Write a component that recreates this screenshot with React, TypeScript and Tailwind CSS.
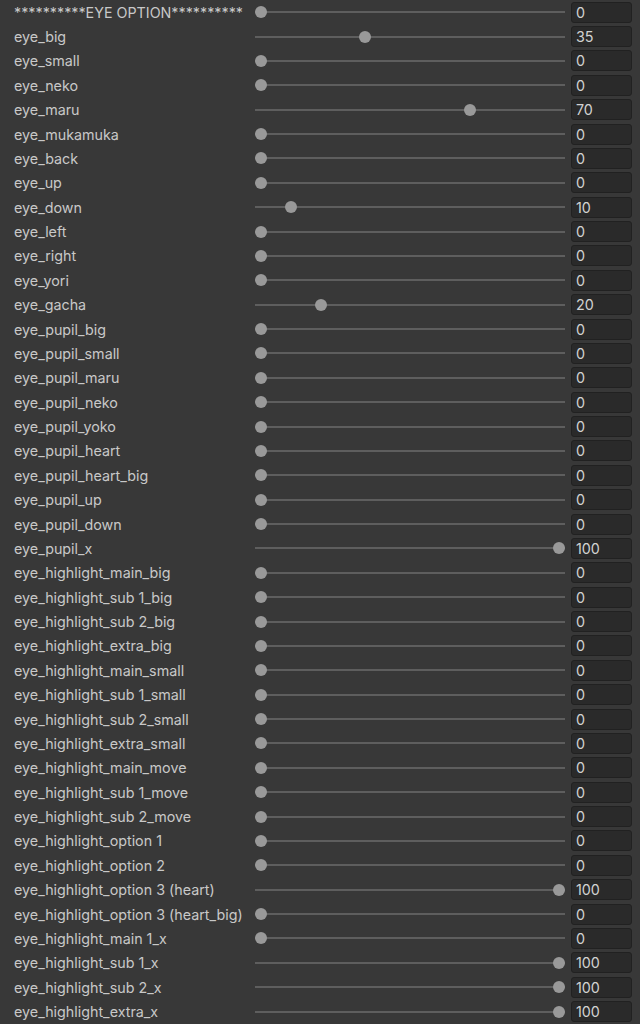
const rows: [string, number][] = [
  ['**********EYE OPTION**********', 0],
  ['eye_big', 35],
  ['eye_small', 0],
  ['eye_neko', 0],
  ['eye_maru', 70],
  ['eye_mukamuka', 0],
  ['eye_back', 0],
  ['eye_up', 0],
  ['eye_down', 10],
  ['eye_left', 0],
  ['eye_right', 0],
  ['eye_yori', 0],
  ['eye_gacha', 20],
  ['eye_pupil_big', 0],
  ['eye_pupil_small', 0],
  ['eye_pupil_maru', 0],
  ['eye_pupil_neko', 0],
  ['eye_pupil_yoko', 0],
  ['eye_pupil_heart', 0],
  ['eye_pupil_heart_big', 0],
  ['eye_pupil_up', 0],
  ['eye_pupil_down', 0],
  ['eye_pupil_x', 100],
  ['eye_highlight_main_big', 0],
  ['eye_highlight_sub 1_big', 0],
  ['eye_highlight_sub 2_big', 0],
  ['eye_highlight_extra_big', 0],
  ['eye_highlight_main_small', 0],
  ['eye_highlight_sub 1_small', 0],
  ['eye_highlight_sub 2_small', 0],
  ['eye_highlight_extra_small', 0],
  ['eye_highlight_main_move', 0],
  ['eye_highlight_sub 1_move', 0],
  ['eye_highlight_sub 2_move', 0],
  ['eye_highlight_option 1', 0],
  ['eye_highlight_option 2', 0],
  ['eye_highlight_option 3 (heart)', 100],
  ['eye_highlight_option 3 (heart_big)', 0],
  ['eye_highlight_main 1_x', 0],
  ['eye_highlight_sub 1_x', 100],
  ['eye_highlight_sub 2_x', 100],
  ['eye_highlight_extra_x', 100],
];

function Slider({ value }: { value: number }) {
  return (
    <div className="relative w-[310px] h-full flex items-center shrink-0">
      <div className="w-full h-[2px] bg-[#5e5e5e]" />
      <div
        className="absolute top-1/2 w-[12px] h-[12px] -mt-[6px] -ml-[6px] rounded-full bg-[#999999]"
        style={{ left: `${6 + (value / 100) * 298}px` }}
      />
    </div>
  );
}

export default function App() {
  return (
    <div
      className="bg-[#383838] w-[640px] h-[1024px] overflow-hidden text-[14.3px] antialiased"
      style={{ fontFamily: 'Inter, "Noto Sans", sans-serif' }}
    >
      {rows.map(([label, value], i) => (
        <div key={i} className="flex items-center h-[24.381px] pl-[14px] pr-[8px]">
          <div className="w-[241px] shrink-0 text-[#c8c8c8] whitespace-nowrap leading-[20px] pt-[1px]">{label}</div>
          <Slider value={value} />
          <div className="ml-[6px] w-[61px] h-[21px] shrink-0 flex items-center pl-[4px] pt-[1px] rounded-[3px] bg-[#2a2a2a] border border-[#212121] text-[#d2d2d2] leading-[18px]">
            {value}
          </div>
        </div>
      ))}
    </div>
  );
}
